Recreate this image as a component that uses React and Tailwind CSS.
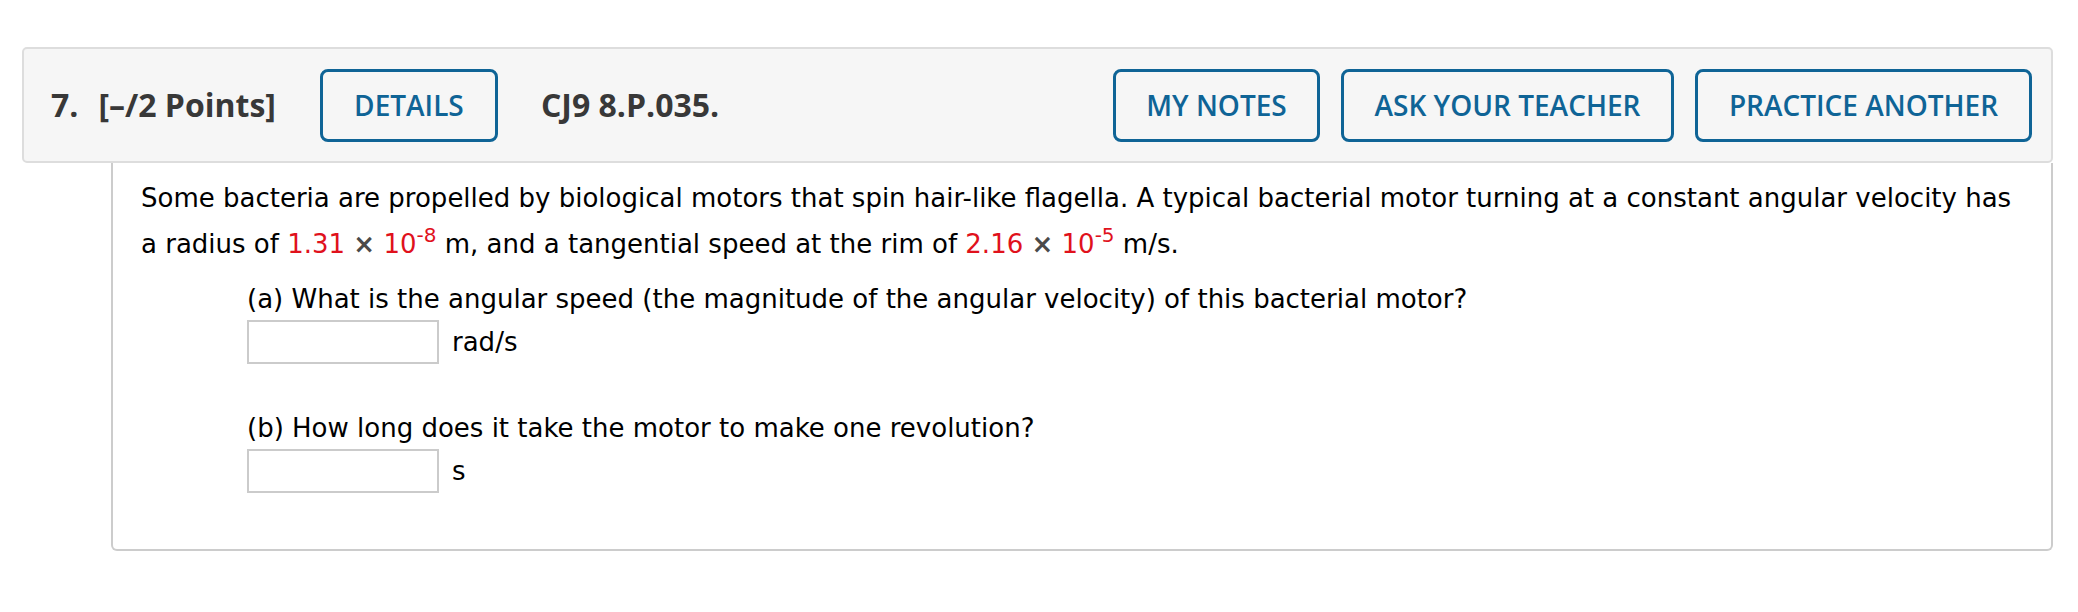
import React from 'react';

const buttons = [
  { label: 'MY NOTES', w: 'w-[207px]' },
  { label: 'ASK YOUR TEACHER', w: 'w-[333px]' },
  { label: 'PRACTICE ANOTHER', w: 'w-[337px]' },
];

const HeaderButton = ({ label, className }) => (
  <button
    className={`h-[73px] ${className} flex items-center justify-center rounded-[8px] border-[3px] border-[#0f6496] bg-[#f6f6f6] text-[28px] font-semibold text-[#0f6496] font-['Open_Sans',sans-serif]`}
  >
    {label}
  </button>
);

const Red = ({ children }) => <span className="text-[#e0111c]">{children}</span>;

const Sci = ({ mant, exp }) => (
  <>
    <Red>{mant}</Red> <span className="text-[#4a4a4a] font-bold">×</span>{' '}
    <Red>
      10<sup className="text-[20px] -top-[11px]">{exp}</sup>
    </Red>
  </>
);

const AnswerBox = ({ unit }) => (
  <div className="flex items-center gap-[13px] mt-px">
    <input type="text" className="w-[192px] h-[44px] border-2 border-[#cbcbcb] bg-white outline-none" />
    <span>{unit}</span>
  </div>
);

const App = () => {
  return (
    <div className="min-h-[612px] bg-white pt-[47px] pl-[22px] pr-[25px]">
      <div className="h-[116px] flex items-center pl-[27px] pr-[19px] bg-[#f6f6f6] border-2 border-[#dddddd] rounded-[5px] text-[#383838] font-['Open_Sans',sans-serif]">
        <span className="text-[32px] font-bold">7.</span>
        <span className="text-[32px] font-bold ml-[20px]">[–/2 Points]</span>
        <HeaderButton label="DETAILS" className="w-[178px] ml-[44px]" />
        <span className="text-[32px] font-bold ml-[43px]">CJ9 8.P.035.</span>
        <div className="flex-1" />
        <div className="flex gap-[21px]">
          {buttons.map((b) => (
            <HeaderButton key={b.label} label={b.label} className={b.w} />
          ))}
        </div>
      </div>

      <div className="ml-[89px] h-[388px] border-2 border-t-0 border-[#cccccc] rounded-b-[6px] pt-[12px] pl-[28px] pr-[30px] text-[26px] text-black font-['DejaVu_Sans','Verdana',sans-serif]">
        <p className="leading-[46px]">
          Some bacteria are propelled by biological motors that spin hair-like flagella. A typical bacterial motor
          turning at a constant angular velocity has a radius of <Sci mant="1.31" exp="-8" /> m, and a tangential
          speed at the rim of <Sci mant="2.16" exp="-5" /> m/s.
        </p>

        <div className="ml-[106px]">
          <div className="mt-[12px]">
            <p className="leading-[40px]">
              (a) What is the angular speed (the magnitude of the angular velocity) of this bacterial motor?
            </p>
            <AnswerBox unit="rad/s" />
          </div>

          <div className="mt-[44px]">
            <p className="leading-[40px]">(b) How long does it take the motor to make one revolution?</p>
            <AnswerBox unit="s" />
          </div>
        </div>
      </div>
    </div>
  );
};

export default App;
